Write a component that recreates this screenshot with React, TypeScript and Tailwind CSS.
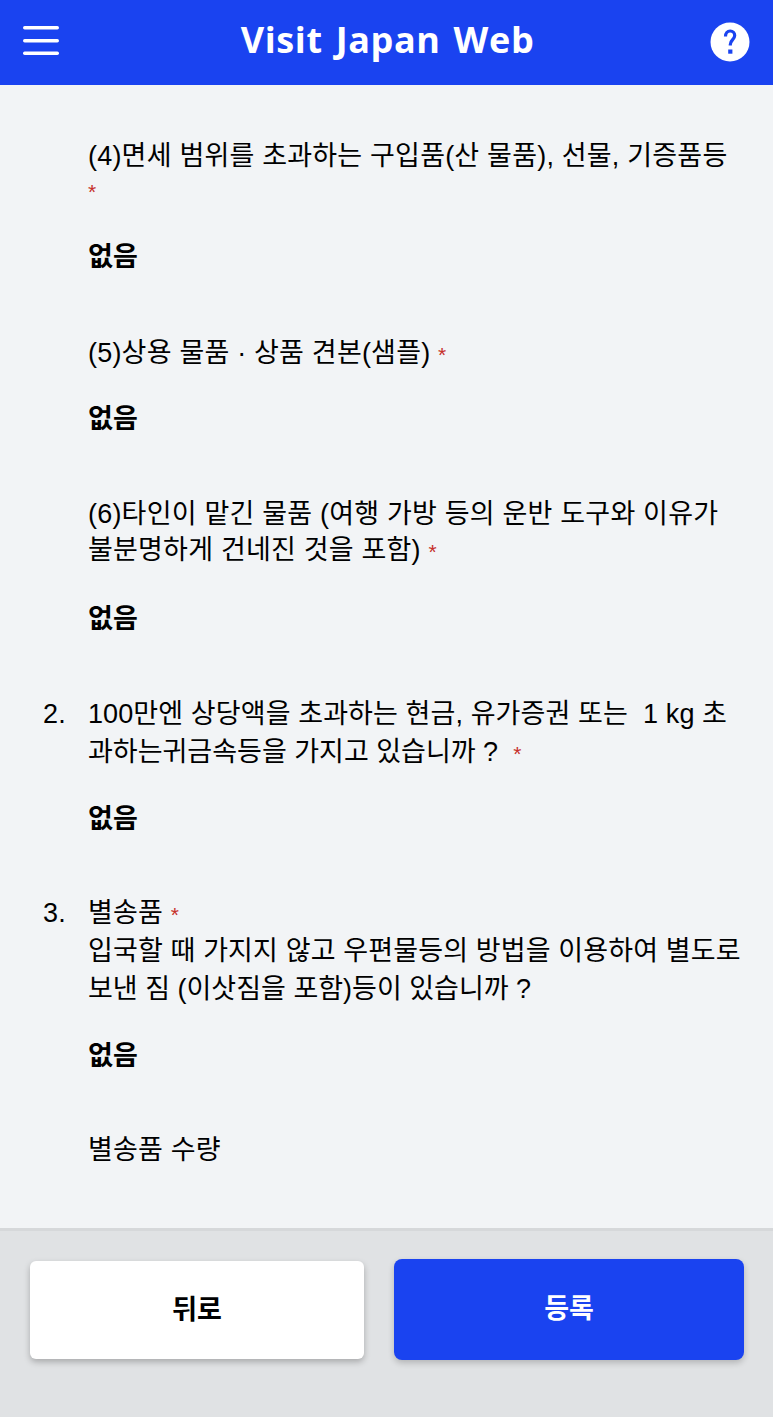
const FONT = "font-['Liberation_Sans','Noto_Sans_CJK_KR',sans-serif]";

const Star = () => <span className="text-[21px] leading-none text-[#c62f2a]">*</span>;

const Answer = ({ className }: { className: string }) => (
  <p className={`h-[38px] text-[27px] leading-[38px] font-bold text-black ${className}`}>없음</p>
);

export default function App() {
  return (
    <div className={`flex h-[1417px] w-[773px] flex-col overflow-hidden bg-[#f2f4f6] text-black ${FONT}`}>
      <header className="flex h-[85px] shrink-0 items-center justify-between bg-[#1a43f0] pr-[23px] pl-[23px]">
        <svg width="36" height="30" viewBox="0 0 36 30" className="mt-[-3px]">
          <rect x="0" y="0" width="36" height="3.4" rx="1.7" fill="#fff" />
          <rect x="0" y="13" width="36" height="3.4" rx="1.7" fill="#fff" />
          <rect x="0" y="25.6" width="36" height="3.4" rx="1.7" fill="#fff" />
        </svg>
        <h1 className="mt-[-5px] ml-[6px] font-['Open_Sans',sans-serif] text-[36px] leading-none font-bold tracking-[0.62px] text-white [word-spacing:3px]">
          Visit Japan Web
        </h1>
        <svg width="40" height="40" viewBox="0 0 40 40" className="mt-[-2px]">
          <circle cx="20" cy="20" r="19.5" fill="#fff" />
          <path d="M15.500 14.500c0-3.200 1.900-5.500 4.700-5.500 2.700 0 4.500 2 4.500 4.500 0 2-1 3.200-2.300 4.500-1.300 1.300-2.100 2.300-2.100 4.500v1" fill="none" stroke="#1a43f0" strokeWidth="3.200" />
          <rect x="18.200" y="27.500" width="4.200" height="4.200" fill="#1a43f0" />
        </svg>
      </header>

      <main className="flex-1 pt-[50px] pl-[88px] text-[27px] leading-[38px] tracking-[0.2px]">
        <p className="mt-[2px]">(4)면세 범위를 초과하는 구입품(산 물품), 선물, 기증품등</p>
        <p className="mt-[-4px] h-[38px]"><Star /></p>
        <Answer className="mt-[29px]" />

        <p className="mt-[58px]">(5)상용 물품 · 상품 견본(샘플) <Star /></p>
        <Answer className="mt-[28px]" />

        <p className="mt-[57px]">(6)타인이 맡긴 물품 (여행 가방 등의 운반 도구와 이유가</p>
        <p className="mt-[-2px]">불분명하게 건네진 것을 포함) <Star /></p>
        <Answer className="mt-[31px]" />

        <div className="relative mt-[57px]">
          <span className="absolute top-0 left-[-45px]">2.</span>
          <p className="tracking-[0.1px]">100만엔 상당액을 초과하는 현금, 유가증권 또는&nbsp; 1 kg 초</p>
          <p className="tracking-normal">과하는귀금속등을 가지고 있습니까 ? &nbsp;<Star /></p>
        </div>
        <Answer className="mt-[29px]" />

        <div className="relative mt-[56px]">
          <span className="absolute top-0 left-[-45px]">3.</span>
          <p>별송품 <Star /></p>
          <p className="tracking-[0.13px]">입국할 때 가지지 않고 우편물등의 방법을 이용하여 별도로</p>
          <p className="tracking-normal">보낸 짐 (이삿짐을 포함)등이 있습니까 ?</p>
        </div>
        <Answer className="mt-[29px]" />

        <p className="mt-[56px]">별송품 수량</p>
      </main>

      <footer className="flex h-[189px] shrink-0 items-start gap-[30px] border-t-[3px] border-[#d6d8da] bg-[#e0e2e4] pt-[28px] pl-[30px]">
        <button className="mt-[2px] h-[98px] w-[334px] rounded-[6px] bg-white text-[27px] font-bold text-black shadow-[0_3px_6px_rgba(0,0,0,0.25)]">
          뒤로
        </button>
        <button className="h-[101px] w-[350px] rounded-[8px] bg-[#1a43f0] text-[27px] font-bold text-white shadow-[0_3px_6px_rgba(0,0,0,0.2)]">
          등록
        </button>
      </footer>
    </div>
  );
}
